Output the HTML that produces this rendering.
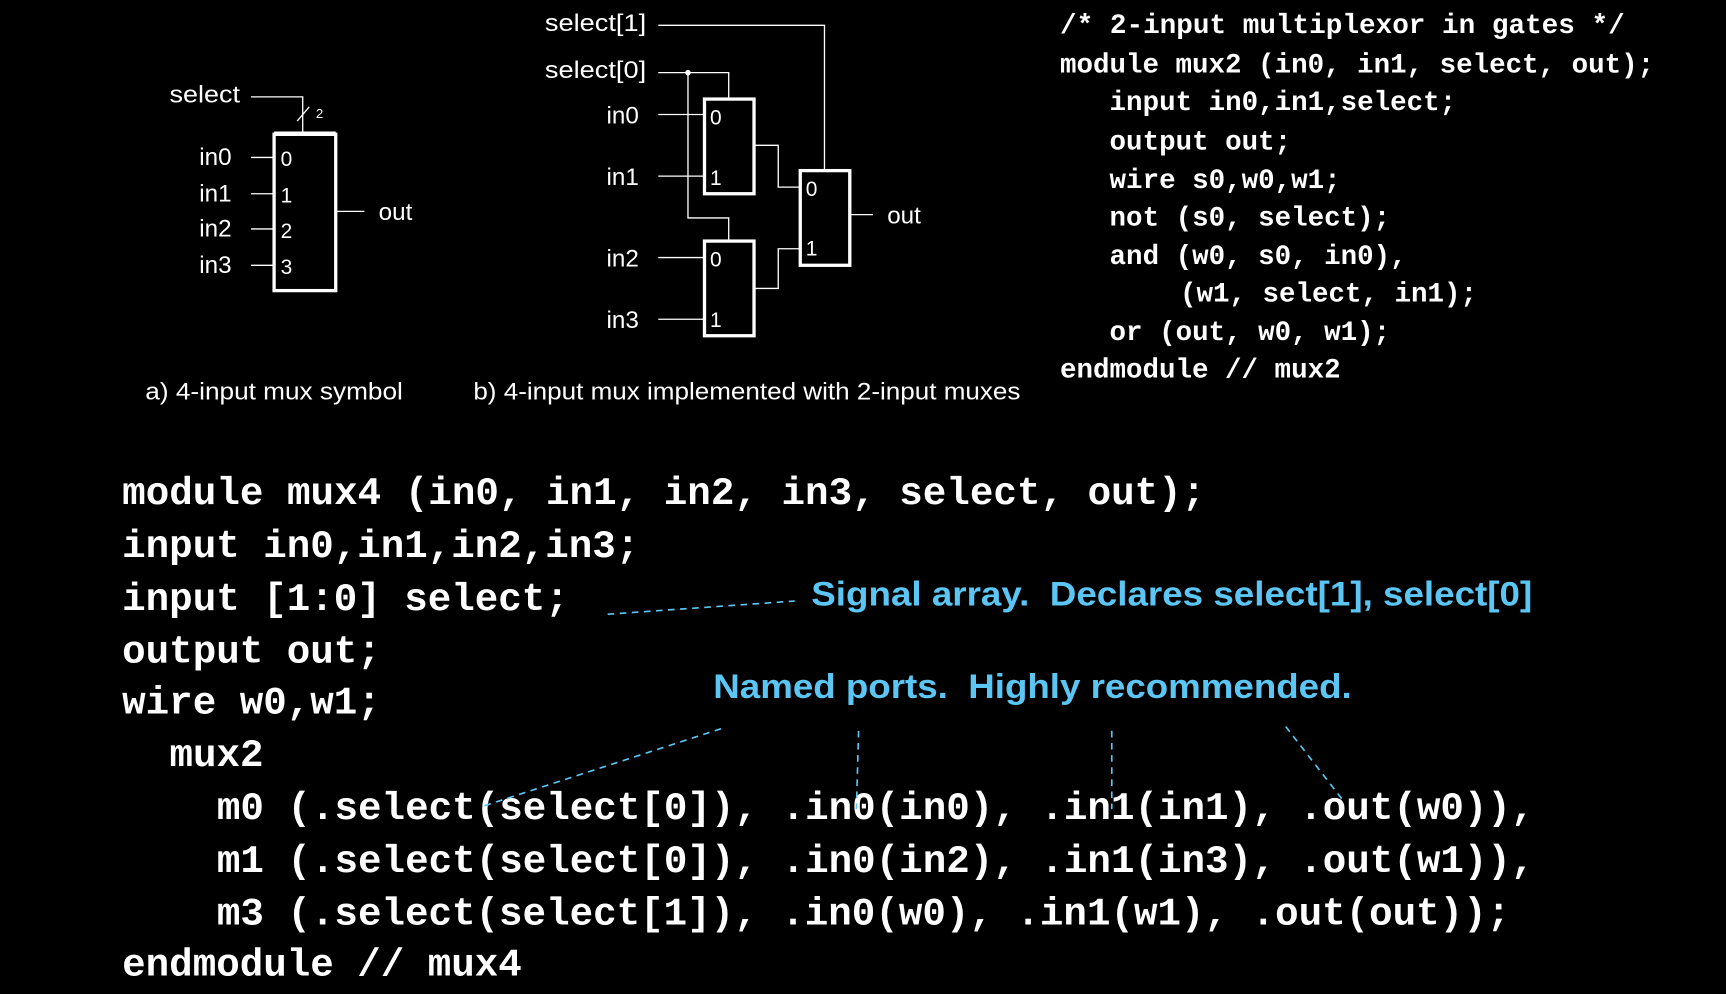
<!DOCTYPE html>
<html><head><meta charset="utf-8"><style>
html,body{margin:0;padding:0;background:#000;width:1726px;height:994px;overflow:hidden}
svg{display:block}
.m{font-family:"Liberation Mono",monospace;font-weight:bold;fill:#fff}
.s{font-family:"Liberation Sans",sans-serif;fill:#fff}
.b{font-family:"Liberation Sans",sans-serif;font-weight:bold;fill:#5bc6f4}
</style></head><body>
<svg width="1726" height="994" viewBox="0 0 1568 903" preserveAspectRatio="none" xmlns="http://www.w3.org/2000/svg">
<rect width="1568" height="903" fill="#000"/>
<!-- mux a -->
<g stroke="#fff" fill="none">
<rect x="249" y="122" width="56" height="142" stroke-width="3"/>
<line x1="249" y1="121.5" x2="305" y2="121.5" stroke-width="4"/>
<polyline points="228,88 275,88 275,121" stroke-width="1.2"/>
<line x1="270" y1="110" x2="281" y2="97" stroke-width="1.2"/>
<g stroke-width="1.2">
<line x1="228" y1="143" x2="249" y2="143"/><line x1="228" y1="176" x2="249" y2="176"/>
<line x1="228" y1="208" x2="249" y2="208"/><line x1="228" y1="241" x2="249" y2="241"/>
<line x1="305" y1="192" x2="331" y2="192"/>
</g>
</g>
<g class="s" font-size="22">
<text x="154" y="93" textLength="64" lengthAdjust="spacingAndGlyphs">select</text>
<text x="287" y="107" font-size="12">2</text>
<text x="181" y="150">in0</text><text x="181" y="183">in1</text><text x="181" y="215">in2</text><text x="181" y="248">in3</text>
<text x="255" y="151" font-size="19">0</text><text x="255" y="184" font-size="19">1</text><text x="255" y="216" font-size="19">2</text><text x="255" y="249" font-size="19">3</text>
<text x="344" y="200">out</text>
</g>
<!-- mux b -->
<g stroke="#fff" fill="none">
<g stroke-width="3">
<rect x="640" y="90" width="45" height="86"/>
<rect x="640" y="219" width="45" height="86"/>
<rect x="727" y="155" width="45" height="86"/>
</g>
<g stroke-width="1.2">
<polyline points="598,23 749,23 749,154"/>
<polyline points="598,66 662,66 662,89"/>
<polyline points="625,66 625,198 662,198 662,218"/>
<line x1="598" y1="104" x2="640" y2="104"/>
<line x1="598" y1="160" x2="640" y2="160"/>
<line x1="598" y1="234" x2="640" y2="234"/>
<line x1="598" y1="290" x2="640" y2="290"/>
<polyline points="685,132 707,132 707,170 727,170"/>
<polyline points="685,262 707,262 707,226 727,226"/>
<line x1="772" y1="195" x2="793" y2="195"/>
</g>
</g>
<circle cx="625" cy="66" r="2.5" fill="#fff"/>
<g class="s" font-size="22">
<text x="495" y="28" textLength="92" lengthAdjust="spacingAndGlyphs">select[1]</text>
<text x="495" y="71" textLength="92" lengthAdjust="spacingAndGlyphs">select[0]</text>
<text x="551" y="112">in0</text><text x="551" y="168">in1</text>
<text x="551" y="242">in2</text><text x="551" y="298">in3</text>
<text x="645" y="113" font-size="19">0</text><text x="645" y="168" font-size="19">1</text>
<text x="645" y="242" font-size="19">0</text><text x="645" y="297" font-size="19">1</text>
<text x="732" y="178" font-size="19">0</text><text x="732" y="232" font-size="19">1</text>
<text x="806" y="203">out</text>
<text x="132" y="363" textLength="234" lengthAdjust="spacingAndGlyphs">a) 4-input mux symbol</text>
<text x="430" y="363" textLength="497" lengthAdjust="spacingAndGlyphs">b) 4-input mux implemented with 2-input muxes</text>
</g>
<!-- top right code -->
<g class="m" font-size="25" xml:space="preserve">
<text x="963" y="30" textLength="513" lengthAdjust="spacingAndGlyphs">/* 2-input multiplexor in gates */</text>
<text x="963" y="66">module mux2 (in0, in1, select, out);</text>
<text x="1008" y="100">input in0,in1,select;</text>
<text x="1008" y="136">output out;</text>
<text x="1008" y="171">wire s0,w0,w1;</text>
<text x="1008" y="205">not (s0, select);</text>
<text x="1008" y="240">and (w0, s0, in0),</text>
<text x="1072" y="274">(w1, select, in1);</text>
<text x="1008" y="309">or  (out, w0, w1);</text>
<text x="963" y="343">endmodule // mux2</text>
</g>
<!-- main code -->
<g class="m" font-size="35.6" xml:space="preserve">
<text x="111" y="458" textLength="984" lengthAdjust="spacingAndGlyphs">module mux4 (in0, in1, in2, in3, select, out);</text>
<text x="111" y="506">input in0,in1,in2,in3;</text>
<text x="111" y="554">input [1:0] select;</text>
<text x="111" y="602">output out;</text>
<text x="111" y="648">wire w0,w1;</text>
<text x="154" y="696">mux2</text>
<text x="197" y="744" textLength="1197" lengthAdjust="spacingAndGlyphs">m0 (.select(select[0]), .in0(in0), .in1(in1), .out(w0)),</text>
<text x="197" y="792" textLength="1197" lengthAdjust="spacingAndGlyphs">m1 (.select(select[0]), .in0(in2), .in1(in3), .out(w1)),</text>
<text x="197" y="840" textLength="1175" lengthAdjust="spacingAndGlyphs">m3 (.select(select[1]), .in0(w0), .in1(w1), .out(out));</text>
<text x="111" y="886">endmodule // mux4</text>
</g>
<text class="b" x="737" y="550" font-size="31" textLength="655" lengthAdjust="spacingAndGlyphs" xml:space="preserve">Signal array.  Declares select[1], select[0]</text>
<text class="b" x="648" y="634" font-size="31" textLength="580" lengthAdjust="spacingAndGlyphs" xml:space="preserve">Named ports.  Highly recommended.</text>
<g stroke="#5bc6f4" stroke-width="1.5" stroke-dasharray="6,5" fill="none">
<line x1="552" y1="558" x2="722" y2="546"/>
<line x1="655" y1="662" x2="440" y2="732"/>
<line x1="780" y1="664" x2="778" y2="735"/>
<line x1="1010" y1="664" x2="1010" y2="735"/>
<line x1="1168" y1="660" x2="1220" y2="727"/>
</g>
</svg>
</body></html>
